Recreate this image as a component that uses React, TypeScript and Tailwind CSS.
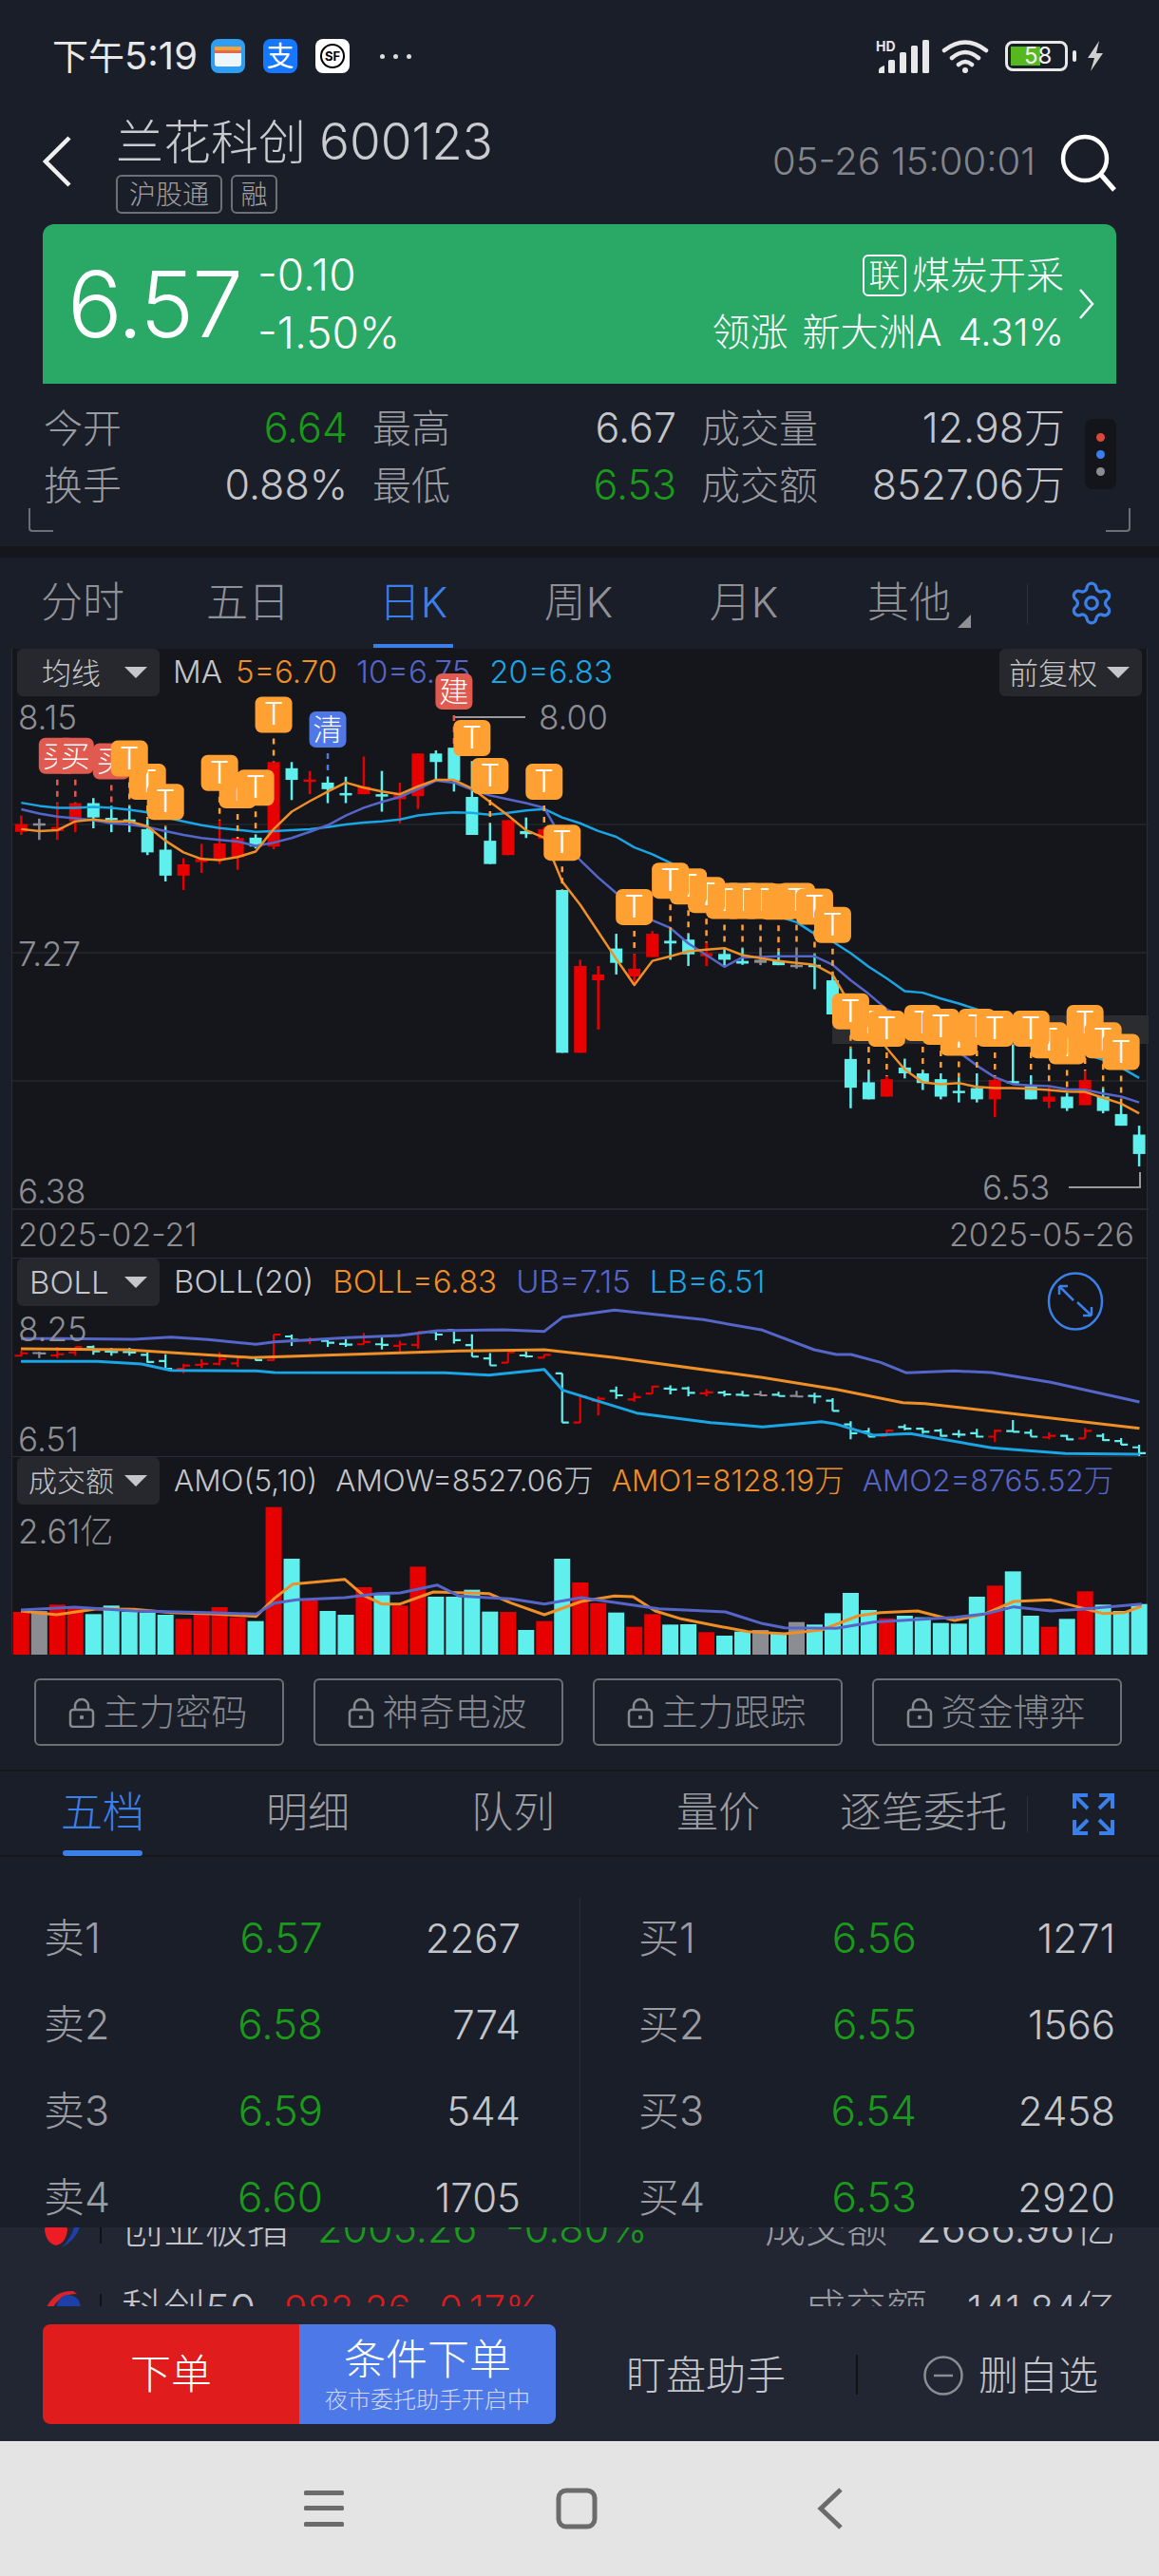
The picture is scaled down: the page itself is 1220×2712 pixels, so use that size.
import React from "react";
import { Settings } from "lucide-react";

const RED = "#e60000", CYAN = "#5ff0ee", GRAY = "#8b8d93";
const ORANGE = "#ef8f26", PURPLE = "#5565c8", SKY = "#1aa5e5";
const colorOf = (c: string) => (c === "r" ? RED : c === "c" ? CYAN : GRAY);
const X = (i: number) => 21.35 + 18.98 * i;
const Y = (z: number) => 680 + z / 2.45;

const candles: [string, number, number, number, number][] = [
  ["r",440,462,482,490],["g",448,460,463,503],["r",408,470,480,503],["r",408,408,455,483],["c",395,408,445,473],
  ["c",415,446,450,483],["c",415,450,455,483],["c",450,475,535,542],["c",470,528,595,610],["r",550,566,595,632],
  ["r",513,552,560,588],["r",452,512,552,565],["r",500,498,548,580],["c",490,497,520,525],["r",302,302,520,527],
  ["c",302,318,348,400],["r",325,347,353,385],["c",340,355,372,408],["c",340,382,388,408],["r",288,365,385,385],
  ["c",325,385,390,430],["r",355,385,398,460],["r",280,280,390,423],["c",272,280,302,350],["c",265,265,350,378],
  ["c",300,392,490,490],["c",460,505,565,565],["r",452,452,542,542],["c",445,480,488,498],["r",470,475,500,500],
  ["c",632,632,1052,1052],["r",812,828,1052,1052],["r",828,850,865,992],["c",745,783,820,850],["r",797,835,855,875],
  ["r",738,745,805,805],["c",735,763,770,812],["c",745,760,798,828],["r",768,795,803,828],["c",780,797,812,830],
  ["c",782,815,822,825],["g",782,812,820,826],["c",790,815,826,826],["g",782,825,830,835],["c",797,825,830,888],
  ["c",845,865,953,953],["c",1040,1068,1142,1195],["c",1098,1128,1172,1172],["r",1112,1120,1165,1165],["c",1067,1090,1105,1118],
  ["c",1098,1105,1130,1148],["c",1105,1120,1165,1172],["c",1115,1150,1155,1180],["c",1105,1143,1172,1180],["r",1112,1122,1172,1218],
  ["c",1030,1125,1130,1130],["c",1110,1138,1172,1172],["r",1135,1165,1178,1195],["c",1155,1165,1195,1202],["r",1098,1122,1187,1187],
  ["c",1143,1165,1202,1208],["c",1185,1210,1240,1240],["c",1240,1263,1313,1345],
];
const ma5 = [475,480,478,455,450,455,455,468,505,535,552,555,547,533,475,430,403,378,355,368,378,385,365,348,348,370,405,440,478,497,610,670,740,810,877,815,803,790,786,782,800,808,815,820,825,850,930,965,1040,1095,1128,1133,1130,1140,1143,1143,1145,1148,1152,1153,1168,1183,1208];
const ma10 = [424,435,443,447,452,460,463,470,480,490,498,503,507,518,510,498,482,465,440,420,405,392,372,350,355,373,388,398,408,420,500,555,600,640,680,710,730,770,800,830,806,805,803,803,803,825,865,900,940,960,990,1020,1050,1085,1115,1133,1136,1138,1146,1147,1157,1165,1180];
const ma20 = [407,415,420,420,418,420,425,432,445,455,465,472,477,482,480,478,475,470,463,458,455,450,440,435,432,433,438,433,427,423,445,460,480,495,522,540,562,590,620,640,660,680,700,715,745,765,795,830,860,893,897,912,925,940,960,980,1000,1025,1045,1055,1070,1090,1117];

type Mark = [number, number, string];
const marks: Mark[] = [
  [2,286,"买"],[3,286,"买"],[5,300,"买"],[7,353,"T"],[6,293,"T"],[8,405,"T"],[12,375,"T"],[11,330,"T"],[13,368,"T"],[14,180,"T"],[17,218,"清"],
  [24,120,"建"],[25,240,"T"],[26,338,"T"],[29,353,"T"],[30,510,"T"],[34,676,"T"],
  [42,662,"T"],[41,660,"T"],[40,660,"T"],[39,660,"T"],[38,645,"T"],[37,623,"T"],[36,608,"T"],[43,660,"T"],[44,675,"T"],[45,722,"T"],
  [47,975,"T"],[46,945,"T"],[48,990,"T"],[52,1013,"T"],[53,985,"T"],[50,975,"T"],[51,985,"T"],[54,990,"T"],
  [58,1035,"T"],[57,1020,"T"],[56,990,"T"],[59,975,"T"],[60,1020,"T"],[61,1050,"T"],
];
const markColor = (t: string) => (t === "T" ? "#ffa033" : t === "清" ? "#4f78e6" : "#e05a4f");

const bollU = [[27,265],[80,265],[180,267],[230,260],[280,268],[345,283],[370,275],[470,262],[540,255],[590,240],[680,237],[735,242],[760,197],[830,175],[950,205],[1030,238],[1100,300],[1130,315],[1150,315],[1190,340],[1225,373],[1290,367],[1340,372],[1420,403],[1540,465]];
const bollM = [[27,297],[170,300],[250,312],[340,325],[400,320],[540,310],[620,304],[735,300],[830,325],[1030,388],[1130,425],[1220,467],[1250,470],[1540,548]];
const bollL = [[27,337],[130,337],[190,345],[230,365],[345,367],[370,372],[600,373],[660,380],[735,362],[760,428],[860,500],[960,530],[1030,544],[1110,527],[1130,535],[1180,570],[1230,565],[1340,610],[1440,628],[1540,630]];
const bars: [string, number][] = [
  ["r",1128],["g",1125],["r",1105],["r",1110],["c",1135],["c",1108],["c",1128],["c",1130],["c",1137],["r",1150],["r",1135],["r",1113],["r",1145],["c",1157],["r",797],["c",960],["r",1092],["c",1125],["c",1137],["r",1050],["c",1075],["r",1108],["r",985],["c",1080],["c",1080],["c",1058],["c",1127],["r",1128],["c",1185],["r",1157],["c",960],["r",1035],["r",1100],["c",1130],["r",1175],["r",1135],["c",1168],["c",1167],["r",1192],["c",1203],["c",1190],["g",1185],["c",1195],["g",1160],["c",1168],["c",1132],["c",1068],["c",1122],["r",1148],["c",1140],["c",1145],["c",1163],["c",1165],["c",1080],["r",1045],["c",1000],["c",1140],["r",1175],["c",1150],["r",1063],["c",1105],["c",1125],["c",1103],
];
const amo1 = [[27,1125],[75,1137],[130,1118],[180,1120],[230,1130],[290,1135],[345,1142],[370,1085],[395,1040],[465,1025],[490,1075],[515,1103],[540,1103],[585,1065],[660,1070],[690,1100],[735,1137],[785,1095],[830,1078],[855,1080],[885,1125],[920,1150],[975,1175],[1010,1190],[1060,1197],[1110,1185],[1160,1140],[1190,1130],[1240,1125],[1290,1155],[1330,1135],[1370,1095],[1420,1090],[1450,1108],[1490,1133],[1520,1130],[1543,1110]];
const amo2 = [[27,1122],[100,1113],[180,1125],[280,1130],[345,1135],[370,1100],[400,1090],[465,1083],[510,1070],[540,1068],[590,1043],[620,1078],[690,1087],[735,1103],[785,1083],[890,1118],[980,1128],[1030,1165],[1060,1178],[1130,1180],[1180,1160],[1290,1145],[1330,1135],[1370,1112],[1420,1125],[1460,1120],[1543,1103]];
const zx = (x: number) => x / 1.285;
const zy = (y: number) => 1320 + y / 3;
const zpts = (a: number[][]) => a.map(([x, y]) => `${zx(x)},${zy(y)}`).join(" ");
const maPts = (a: number[]) => a.map((v, i) => `${X(i)},${Y(v)}`).join(" ");
const by = (m: number) => (252 + (m - 302) * 0.3707) / 3 + 1320;

function MainChart() {
  return (
    <svg viewBox="12 684 1196 591" width={1196} height={591} className="absolute left-0 top-0">
      {[869, 1004, 1139].map((y) => <line key={y} x1={12} x2={1208} y1={y} y2={y} stroke="#25272d" strokeWidth={1.5} />)}
      <line x1={12} x2={1208} y1={1274} y2={1274} stroke="#2c2e34" strokeWidth={1.5} />
      <rect x={875} y={1070} width={333} height={30} fill="#2a2c30" />
      <line x1={476} x2={552} y1={756} y2={756} stroke="#9a9a9a" strokeWidth={2} />
      <path d="M1124 1251 H1199 V1235" fill="none" stroke="#9a9a9a" strokeWidth={2} />
      {candles.map(([c, wt, bt, bb, wb], i) => (
        <g key={i} fill={colorOf(c)}>
          <rect x={X(i) - 1.25} y={Y(wt)} width={2.5} height={(wb - wt) / 2.45} />
          <rect x={X(i) - 6.5} y={Y(bt)} width={13} height={Math.max((bb - bt) / 2.45, 2.5)} />
        </g>
      ))}
      <polyline points={maPts(ma20)} fill="none" stroke={SKY} strokeWidth={2.5} strokeLinejoin="round" />
      <polyline points={maPts(ma10)} fill="none" stroke={PURPLE} strokeWidth={2.5} strokeLinejoin="round" />
      <polyline points={maPts(ma5)} fill="none" stroke={ORANGE} strokeWidth={2.5} strokeLinejoin="round" />
      {marks.map(([i, z, t]) => (
        <line key={i} x1={X(i)} x2={X(i)} y1={Y(z) + 25} y2={Y(candles[i][1])} stroke={markColor(t)} strokeWidth={2.5} strokeDasharray="6 6" />
      ))}
      {marks.map(([i, z, t]) => (
        <g key={i}>
          <rect x={X(i) - 19.5} y={Y(z) - 19} width={39} height={38} rx={7} fill={markColor(t)} />
          <text x={X(i)} y={Y(z) + 11} textAnchor="middle" fontSize={t === "T" ? 32 : 31} fontWeight={300} fill="#fff">{t}</text>
        </g>
      ))}
    </svg>
  );
}

function BollChart() {
  return (
    <svg viewBox="12 1324 1196 209" width={1196} height={209} className="absolute left-0 top-0">
      <g fill="none" strokeWidth={2.2}>
        {candles.map(([c, wt, bt, bb, wb], i) => {
          const open = c === "r" ? bb : bt;
          const close = c === "r" ? bt : bb;
          return (
            <path
              key={i}
              stroke={colorOf(c)}
              d={`M${X(i)} ${by(wt)} V${by(wb)} M${X(i) - 7} ${by(open)} H${X(i)} M${X(i)} ${by(close)} H${X(i) + 7}`}
            />
          );
        })}
      </g>
      <polyline points={zpts(bollU)} fill="none" stroke={PURPLE} strokeWidth={3} strokeLinejoin="round" />
      <polyline points={zpts(bollM)} fill="none" stroke={ORANGE} strokeWidth={3} strokeLinejoin="round" />
      <polyline points={zpts(bollL)} fill="none" stroke={SKY} strokeWidth={3} strokeLinejoin="round" />
      <ellipse cx={1131} cy={1369} rx={28} ry={29.5} fill="none" stroke="#3b7fe8" strokeWidth={2.5} />
      <path d="M1114 1353 L1129 1368 M1114 1353 v9 M1114 1353 h9 M1133 1370 L1148 1384 M1148 1384 v-9 M1148 1384 h-9" fill="none" stroke="#3b7fe8" strokeWidth={2.5} />
    </svg>
  );
}

function AmoChart() {
  return (
    <svg viewBox="12 1533 1196 208" width={1196} height={208} className="absolute left-0 top-0">
      {bars.map(([c, t], i) => (
        <rect key={i} x={X(i) - 8.5} y={zy(t)} width={17} height={zy(1263) - zy(t)} fill={colorOf(c)} />
      ))}
      <polyline points={zpts(amo1)} fill="none" stroke={ORANGE} strokeWidth={3} strokeLinejoin="round" />
      <polyline points={zpts(amo2)} fill="none" stroke={PURPLE} strokeWidth={3} strokeLinejoin="round" />
    </svg>
  );
}

function Drop({ label, pad }: { label: string; pad: string }) {
  return (
    <div className={`flex h-[50px] w-[150px] items-center justify-between rounded-md bg-[#26282e] pr-[13px] text-[#c4c6ca] ${pad}`}>
      <span className="leading-none">{label}</span>
      <svg width="24" height="14" viewBox="0 0 24 14"><path d="M0 1 H24 L12 13 Z" fill="#c4c6ca" /></svg>
    </div>
  );
}

function StatusBar() {
  return (
    <div className="flex h-[100px] shrink-0 items-center pl-[55px] pr-[58px] pt-[18px] font-normal text-[#e8e8e8]">
      <span className="w-[167px] text-[38px] leading-none whitespace-nowrap">下午<span className="text-[40px]">5:19</span></span>
      <div className="flex items-center gap-[19px]">
        <svg width="36" height="36" viewBox="0 0 36 36">
          <rect width="36" height="36" rx="8" fill="#2e9df2" />
          <rect x="4" y="8" width="28" height="4" fill="#f0a43a" />
          <rect x="4" y="12" width="28" height="3" fill="#e06a4a" />
          <path d="M4 15 H32 V26 a3 3 0 0 1 -3 3 H7 a3 3 0 0 1 -3 -3 Z" fill="#eef6fd" />
        </svg>
        <div className="flex h-[36px] w-[36px] items-center justify-center rounded-lg bg-[#1677ff] text-[29px] leading-none text-white">支</div>
        <div className="flex h-[36px] w-[36px] items-center justify-center rounded-lg bg-white">
          <div className="flex h-[26px] w-[26px] items-center justify-center rounded-full border-2 border-black text-[13px] font-bold leading-none text-black">SF</div>
        </div>
      </div>
      <div className="ml-[32px] flex gap-[9px]">
        <span className="h-[5px] w-[5px] rounded-full bg-[#ddd]" />
        <span className="h-[5px] w-[5px] rounded-full bg-[#ddd]" />
        <span className="h-[5px] w-[5px] rounded-full bg-[#ddd]" />
      </div>
      <div className="ml-auto flex items-center">
        <svg width="56" height="36" viewBox="0 0 56 36" className="mr-[13px]">
          <text x="0" y="13" fontSize="14" fontWeight="700" fill="#e8e8e8">HD</text>
          <g fill="#e8e8e8">
            <path d="M3 36 v-3 q0 -3 6 -5 v8 Z" />
            <rect x="13" y="22" width="7" height="14" rx="1.5" />
            <rect x="25" y="14" width="7" height="22" rx="1.5" />
            <rect x="37" y="7" width="7" height="29" rx="1.5" />
            <rect x="49" y="1" width="7" height="35" rx="1.5" />
          </g>
        </svg>
        <svg width="50" height="36" viewBox="0 0 50 36" className="mr-[17px]">
          <g fill="none" stroke="#e8e8e8" strokeWidth="4.5" strokeLinecap="round">
            <path d="M3 12 Q25 -5 47 12" />
            <path d="M11 20 Q25 8 39 20" />
            <path d="M18 27 Q25 21 32 27" />
          </g>
          <circle cx="25" cy="33" r="3" fill="#e8e8e8" />
        </svg>
        <div className="relative mr-[5px] flex h-[32px] w-[66px] items-center rounded-lg border-[3px] border-[#e8e8e8] p-[3px]">
          <div className="h-full w-[31px] bg-[#55b81f]" />
          <span className="absolute left-[17px] top-[1px] text-[24px] leading-[24px] text-[#f0f0f0]">58</span>
        </div>
        <div className="mr-[11px] h-[12px] w-[4px] rounded-sm bg-[#e8e8e8]" />
        <svg width="18" height="32" viewBox="0 0 18 32"><path d="M13 0 L1 18 H8 L4 32 L17 13 H10 Z" fill="#cfcfcf" /></svg>
      </div>
    </div>
  );
}

function Header() {
  return (
    <div className="flex h-[136px] shrink-0 pl-[45px] pr-[45px]">
      <svg width="30" height="54" viewBox="0 0 30 54" className="mt-[43px] mr-[47px] shrink-0"><path d="M28 2 L3 27 L28 52" fill="none" stroke="#f0f0f0" strokeWidth="4.5" /></svg>
      <div className="flex flex-col pt-[19px]">
        <div className="h-[60px] text-[50px] leading-[60px] text-[#c9cbcf] whitespace-nowrap">兰花科创 <span className="text-[53px]">600123</span></div>
        <div className="mt-[5px] flex gap-[9px] text-[28px] leading-none text-[#a0a2a7]">
          <span className="flex h-[41px] w-[112px] items-center justify-center rounded-md border-2 border-[#6e7076]">沪股通</span>
          <span className="flex h-[41px] w-[49px] items-center justify-center rounded-md border-2 border-[#6e7076]">融</span>
        </div>
      </div>
      <div className="ml-auto flex items-start">
        <span className="mt-[49px] text-[40px] leading-[42px] text-[#83868c] whitespace-nowrap">05-26 15:00:01</span>
        <svg width="60" height="62" viewBox="0 0 60 62" className="ml-[25px] mt-[40px]">
          <circle cx="27" cy="27" r="23" fill="none" stroke="#fff" strokeWidth="4.5" />
          <path d="M44 44 L58 60" stroke="#fff" strokeWidth="5" />
        </svg>
      </div>
    </div>
  );
}

function PriceCard() {
  return (
    <div className="mx-[45px] flex h-[168px] shrink-0 items-center rounded-t-xl bg-[#2aa866] pl-[26px] pr-[23px] text-white">
      <span className="w-[200px] text-[96px] leading-none tracking-[-2px]">6.57</span>
      <div className="flex flex-col text-[46px] leading-[61px]">
        <span>-0.10</span>
        <span>-1.50%</span>
      </div>
      <div className="ml-auto flex flex-col items-end text-[40px] leading-[60px]">
        <div className="flex items-center gap-[6px]">
          <span className="flex h-[44px] w-[46px] items-center justify-center rounded-md border-2 border-white text-[33px] leading-none">联</span>
          <span>煤炭开采</span>
        </div>
        <span className="whitespace-pre">领涨<span className="ml-[15px]">新大洲A</span><span className="ml-[17px]">4.31%</span></span>
      </div>
      <svg width="17" height="32" viewBox="0 0 17 32" className="ml-[15px] shrink-0"><path d="M2 1 L15 16 L2 31" fill="none" stroke="#fff" strokeWidth="2.5" /></svg>
    </div>
  );
}

function StatCell({ k, v, w, green }: { k: string; v: string; w: string; green?: boolean }) {
  return (
    <div className={`flex items-baseline justify-between ${w}`}>
      <span className="text-[#9a9ca1]">{k}</span>
      <span className={`text-[43px] ${green ? "text-[#1a9a1a]" : "text-[#c3c5c9]"}`}>{v}</span>
    </div>
  );
}

function Stats() {
  return (
    <div className="relative h-[171px] shrink-0 pl-[46px] pt-[17px] text-[41px] leading-[59px]">
      <div className="flex gap-[26px]">
        <StatCell k="今开" v="6.64" w="w-[320px]" green />
        <StatCell k="最高" v="6.67" w="w-[320px]" />
        <StatCell k="成交量" v="12.98万" w="w-[383px]" />
      </div>
      <div className="flex gap-[26px]">
        <StatCell k="换手" v="0.88%" w="w-[320px]" />
        <StatCell k="最低" v="6.53" w="w-[320px]" green />
        <StatCell k="成交额" v="8527.06万" w="w-[383px]" />
      </div>
      <div className="absolute left-[1142px] top-[37px] flex h-[74px] w-[33px] flex-col items-center justify-center gap-[9px] rounded-lg bg-[#13151b]">
        <span className="h-[9px] w-[9px] rounded-full bg-[#d9483b]" />
        <span className="h-[9px] w-[9px] rounded-full bg-[#3b7fe8]" />
        <span className="h-[9px] w-[9px] rounded-full bg-[#8b8d93]" />
      </div>
      <div className="absolute left-[30px] top-[131px] h-[25px] w-[26px] rounded-bl border-b-2 border-l-2 border-[#6c6f76]" />
      <div className="absolute left-[1164px] top-[131px] h-[25px] w-[26px] rounded-br border-b-2 border-r-2 border-[#6c6f76]" />
    </div>
  );
}

function ChartTabs() {
  const tabs = ["分时", "五日", "日K", "周K", "月K", "其他"];
  return (
    <div className="relative flex h-[96px] shrink-0 items-center text-[44px]">
      {tabs.map((t, i) => (
        <div key={t} className={`flex w-[174px] items-center justify-center pb-[2px] ${i === 2 ? "text-[#3b7fe8]" : "text-[#8f9196]"}`}>{t}</div>
      ))}
      <svg width="14" height="14" viewBox="0 0 14 14" className="absolute left-[1008px] top-[60px]"><path d="M14 0 V14 H0 Z" fill="#8f9196" /></svg>
      <div className="absolute left-[1081px] top-[28px] h-[42px] w-[1px] bg-[#2e313a]" />
      <Settings className="absolute left-[1124px] top-[23px]" size={50} strokeWidth={1.6} color="#3b7fe8" />
      <div className="absolute left-[393px] top-[91px] h-[4px] w-[84px] bg-[#3b7fe8]" />
    </div>
  );
}

function PriceLabel({ children, className }: { children: React.ReactNode; className: string }) {
  return <span className={`absolute leading-none text-[#8c8e93] whitespace-nowrap ${className}`}>{children}</span>;
}

function MainPanel() {
  return (
    <div className="relative mx-[12px] h-[641px] w-[1196px] shrink-0 border-x border-[#2a2d33] bg-[#14161c] text-[35px]">
      <div className="flex h-[50px] items-center pl-[5px] text-[33px] whitespace-nowrap">
        <Drop label="均线" pad="pl-[26px] text-[31px]" />
        <span className="ml-[14px] text-[#c4c6ca]">MA</span>
        <span className="ml-[14px] text-[#ef8f26]">5=6.70</span>
        <span className="ml-[20px] text-[#5565c8]">10=6.75</span>
        <span className="ml-[20px] text-[#1aa5e5]">20=6.83</span>
        <div className="ml-auto mr-[5px]"><Drop label="前复权" pad="pl-[10px] text-[31px]" /></div>
      </div>
      <MainChart />
      <PriceLabel className="left-[6px] top-[55px]">8.15</PriceLabel>
      <PriceLabel className="left-[554px] top-[55px]">8.00</PriceLabel>
      <PriceLabel className="left-[6px] top-[304px]">7.27</PriceLabel>
      <PriceLabel className="left-[6px] top-[554px]">6.38</PriceLabel>
      <PriceLabel className="left-[1021px] top-[550px]">6.53</PriceLabel>
      <PriceLabel className="left-[6px] top-[600px] text-[34px] text-[#6f7178]">2025-02-21</PriceLabel>
      <PriceLabel className="left-[986px] top-[600px] text-[34px] text-[#6f7178]">2025-05-26</PriceLabel>
    </div>
  );
}

function BollPanel() {
  return (
    <div className="relative mx-[12px] h-[209px] w-[1196px] shrink-0 border-x border-t border-[#2a2d33] bg-[#14161c] text-[33px]">
      <BollChart />
      <div className="relative flex h-[50px] items-center pl-[5px] whitespace-nowrap">
        <Drop label="BOLL" pad="pl-[13px] text-[33px]" />
        <span className="ml-[15px] text-[#c4c6ca]">BOLL(20)</span>
        <span className="ml-[20px] text-[#ef8f26]">BOLL=6.83</span>
        <span className="ml-[20px] text-[#5565c8]">UB=7.15</span>
        <span className="ml-[20px] text-[#1aa5e5]">LB=6.51</span>
      </div>
      <PriceLabel className="left-[6px] top-[57px] text-[35px]">8.25</PriceLabel>
      <PriceLabel className="left-[6px] top-[173px] text-[35px]">6.51</PriceLabel>
    </div>
  );
}

function AmoPanel() {
  return (
    <div className="relative mx-[12px] h-[208px] w-[1196px] shrink-0 border-x border-t border-[#2a2d33] bg-[#14161c] text-[31.5px]">
      <AmoChart />
      <div className="relative flex h-[50px] items-center pl-[5px] whitespace-nowrap">
        <Drop label="成交额" pad="pl-[12px] text-[30px]" />
        <span className="ml-[15px] text-[#c4c6ca]">AMO(5,10)</span>
        <span className="ml-[19px] text-[#c4c6ca]">AMOW=8527.06万</span>
        <span className="ml-[19px] text-[#ef8f26]">AMO1=8128.19万</span>
        <span className="ml-[19px] text-[#5565c8]">AMO2=8765.52万</span>
      </div>
      <PriceLabel className="left-[6px] top-[61px] text-[35px]">2.61亿</PriceLabel>
    </div>
  );
}

function LockGlyph() {
  return (
    <svg width="28" height="32" viewBox="0 0 28 32" className="shrink-0">
      <path d="M7 13 V9 a7 7 0 0 1 14 0 V13" fill="none" stroke="#878a90" strokeWidth="2.5" />
      <rect x="2" y="13" width="24" height="18" rx="3" fill="none" stroke="#878a90" strokeWidth="2.5" />
      <circle cx="14" cy="21" r="2.2" fill="#878a90" />
    </svg>
  );
}

function ToolButtons() {
  const items = ["主力密码", "神奇电波", "主力跟踪", "资金博弈"];
  return (
    <div className="flex h-[122px] shrink-0 gap-[31px] pl-[36px] pt-[26px]">
      {items.map((t) => (
        <div key={t} className="flex h-[71px] w-[263px] items-center justify-center gap-[8px] rounded-md border-2 border-[#6c6f76] pr-[2px] text-[38px] text-[#878a90]">
          <LockGlyph />
          <span>{t}</span>
        </div>
      ))}
    </div>
  );
}

function BookTabs() {
  const tabs = ["五档", "明细", "队列", "量价", "逐笔委托"];
  return (
    <div className="relative flex h-[92px] shrink-0 items-center border-y-2 border-[#14161c] text-[44px]">
      {tabs.map((t, i) => (
        <div key={t} className={`flex w-[216px] justify-center pb-[2px] ${i === 0 ? "text-[#3b7fe8]" : "text-[#9a9ca1]"}`}>{t}</div>
      ))}
      <div className="absolute left-[1081px] top-[26px] h-[38px] w-[1px] bg-[#2e313a]" />
      <svg width="44" height="44" viewBox="0 0 44 44" className="absolute left-[1129px] top-[23px]">
        <path d="M2 16 V2 H16 M2 2 L16 16 M42 16 V2 H28 M42 2 L28 16 M2 28 V42 H16 M2 42 L16 28 M42 28 V42 H28 M42 42 L28 28" fill="none" stroke="#3b7fe8" strokeWidth="4" />
      </svg>
      <div className="absolute left-[66px] bottom-[-1px] h-[6px] w-[84px] rounded-sm bg-[#3b7fe8]" />
    </div>
  );
}

function BookRow({ k, p, v, pr, vr }: { k: string; p: string; v: string; pr: string; vr: string }) {
  return (
    <div className="relative h-[91px] text-[43px] leading-[91px]">
      <span className="text-[#9a9ca1]">{k}</span>
      <span className={`absolute top-0 text-[44px] text-[#1a9a1a] ${pr}`}>{p}</span>
      <span className={`absolute top-0 text-[42px] text-[#c3c5c9] ${vr}`}>{v}</span>
    </div>
  );
}

function OrderBook() {
  const sell = [["卖1","6.57","2267"],["卖2","6.58","774"],["卖3","6.59","544"],["卖4","6.60","1705"]];
  const buy = [["买1","6.56","1271"],["买2","6.55","1566"],["买3","6.54","2458"],["买4","6.53","2920"]];
  return (
    <div className="flex h-[390px] shrink-0 overflow-hidden">
      <div className="mt-[43px] h-[347px] w-[611px] border-r border-[#2a2d36] pl-[46px]">
        <div className="-mt-[3px]">
          {sell.map((r) => <BookRow key={r[0]} k={r[0]} p={r[1]} v={r[2]} pr="right-[270px]" vr="right-[62px]" />)}
        </div>
      </div>
      <div className="relative mt-[40px] h-[350px] flex-1 pl-[61px]">
        {buy.map((r) => <BookRow key={r[0]} k={r[0]} p={r[1]} v={r[2]} pr="right-[255px]" vr="right-[46px]" />)}
      </div>
    </div>
  );
}

function MarketRow({ logo, name, val, pct, vc, amt, amtW, numSize }: { logo: React.ReactNode; name: string; val: string; pct: string; vc: string; amt: string; amtW: string; numSize: string }) {
  return (
    <div className="flex h-[85px] items-center pl-[45px] pr-[46px] text-[43px] whitespace-nowrap">
      <div className="w-[40px] shrink-0">{logo}</div>
      <div className="ml-[20px] h-[32px] w-[2px] bg-[#101218]" />
      <span className="ml-[21px] text-[44px] text-[#c3c5c9]">{name}</span>
      <span className={`ml-[30px] ${numSize} ${vc}`}>{val}</span>
      <span className={`ml-[30px] ${numSize} ${vc}`}>{pct}</span>
      <span className="ml-auto text-[#9a9ca1]">成交额</span>
      <span className={`text-right text-[#c3c5c9] ${numSize} ${amtW}`}>{amt}</span>
    </div>
  );
}

function MarketStrip() {
  return (
    <div className="h-[83px] shrink-0 overflow-hidden bg-[#222632]">
      <div className="-mt-[42px]">
        <MarketRow
          logo={<svg width="40" height="40" viewBox="0 0 40 40"><path d="M40 14 Q38 30 20 40 Q32 28 34 14 Z" fill="#1c3fa8" /><path d="M2 22 Q2 14 14 16 Q26 14 26 22 Q24 36 14 38 Q4 36 2 22 Z" fill="#ee1c25" /></svg>}
          name="创业板指" val="2005.26" pct="-0.80%" vc="text-[#1a9a1a]" amt="2686.96亿" amtW="w-[240px]" numSize="text-[43px]"
        />
        <MarketRow
          logo={<svg width="40" height="40" viewBox="0 0 40 40"><path d="M3 20 Q12 0 32 1 L36 4 Q18 4 10 20 Z" fill="#d9232a" /><path d="M14 20 Q16 6 26 5 Q40 6 40 20 Z" fill="#1c3fa8" /></svg>}
          name="科创50" val="982.26" pct="0.17%" vc="text-[#d91c1c]" amt="141.84亿" amtW="w-[198px]" numSize="text-[40px]"
        />
      </div>
    </div>
  );
}

function ActionBar() {
  return (
    <div className="flex h-[142px] shrink-0 items-start bg-[#222632] pl-[45px] pt-[19px]">
      <div className="flex h-[105px] w-[270px] items-center justify-center rounded-l-lg bg-[#e01c1c] text-[43px] text-white">下单</div>
      <div className="flex h-[105px] w-[270px] flex-col items-center rounded-r-lg bg-[#4d79e8] pt-[12px] text-white">
        <span className="text-[44px] leading-[50px]">条件下单</span>
        <span className="mt-[3px] text-[24px] leading-[30px] text-[#cdd9f7]">夜市委托助手开启中</span>
      </div>
      <span className="ml-[74px] mt-[30px] text-[42px] leading-[48px] text-[#c3c5c9]">盯盘助手</span>
      <div className="ml-[74px] mt-[32px] h-[42px] w-[2px] bg-[#101218]" />
      <svg width="42" height="42" viewBox="0 0 42 42" className="ml-[69px] mt-[33px]">
        <circle cx="21" cy="21" r="19.5" fill="none" stroke="#8b8d93" strokeWidth="2.5" />
        <path d="M11 21 H31" stroke="#8b8d93" strokeWidth="2.5" />
      </svg>
      <span className="ml-[16px] mt-[30px] text-[42px] leading-[48px] text-[#c3c5c9]">删自选</span>
    </div>
  );
}

function NavBar() {
  return (
    <div className="flex h-[142px] shrink-0 items-center bg-[#e4e4e4] pl-[320px]">
      <svg width="42" height="38" viewBox="0 0 42 38"><g fill="#6b6b6b"><rect width="42" height="5" rx="1.5" /><rect y="16" width="42" height="5" rx="1.5" /><rect y="33" width="42" height="5" rx="1.5" /></g></svg>
      <svg width="44" height="44" viewBox="0 0 44 44" className="ml-[223px]"><rect x="3" y="3" width="38" height="38" rx="8" fill="none" stroke="#6b6b6b" strokeWidth="5" /></svg>
      <svg width="28" height="46" viewBox="0 0 28 46" className="ml-[231px]"><path d="M25 3 L4 23 L25 43" fill="none" stroke="#6b6b6b" strokeWidth="5" /></svg>
    </div>
  );
}

export default function App() {
  return (
    <div className="flex h-[2712px] w-[1220px] flex-col overflow-hidden bg-[#1a1e29] font-light font-['Inter','Noto_Sans_CJK_SC',sans-serif]">
      <StatusBar />
      <Header />
      <PriceCard />
      <Stats />
      <div className="h-[12px] shrink-0 bg-[#14161c]" />
      <ChartTabs />
      <MainPanel />
      <BollPanel />
      <AmoPanel />
      <ToolButtons />
      <BookTabs />
      <OrderBook />
      <MarketStrip />
      <ActionBar />
      <NavBar />
    </div>
  );
}
